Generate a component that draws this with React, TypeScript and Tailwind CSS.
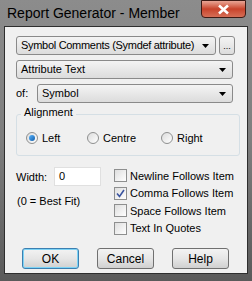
import React from "react";

const font = { fontFamily: '"Liberation Sans", Arial, sans-serif' };

function Arrow() {
  return (
    <svg width="7" height="4" viewBox="0 0 7 4" className="shrink-0">
      <path d="M0 0h7L3.5 4z" fill="#000" />
    </svg>
  );
}

function Combo({ text, className }: { text: string; className: string }) {
  return (
    <div
      className={`h-[19px] flex items-center justify-between pl-[4px] pr-[6px] rounded-[3px] border border-[#8a8a8a] bg-gradient-to-b from-[#f4f4f4] to-[#dcdcdc] text-black ${className}`}
    >
      <span className="whitespace-nowrap">{text}</span>
      <Arrow />
    </div>
  );
}

function Radio({ label, checked }: { label: string; checked?: boolean }) {
  return (
    <div className="flex items-center gap-[4px]">
      <div className="w-[12px] h-[12px] rounded-full border border-[#8e8f8f] bg-gradient-to-br from-[#dcdcdc] to-[#ffffff] flex items-center justify-center">
        {checked && <div className="w-[6px] h-[6px] rounded-full bg-gradient-to-br from-[#57b4ff] to-[#0f5da8]" />}
      </div>
      <span>{label}</span>
    </div>
  );
}

function Check({ label, checked }: { label: string; checked?: boolean }) {
  return (
    <div className="flex items-center gap-[3px] h-[17.5px]">
      <div className="w-[13px] h-[13px] shrink-0 border border-[#8e8f8f] bg-gradient-to-br from-[#dedede] to-[#ffffff] flex items-center justify-center">
        {checked && (
          <svg width="9" height="9" viewBox="0 0 9 9">
            <path d="M1 4.5l2.5 3L8 1" stroke="#3a54a0" strokeWidth="1.6" fill="none" />
          </svg>
        )}
      </div>
      <span className="whitespace-nowrap">{label}</span>
    </div>
  );
}

function Button({ label, focused }: { label: string; focused?: boolean }) {
  return (
    <div
      className={`w-[57px] h-[21px] flex items-center justify-center rounded-[3px] border bg-gradient-to-b from-[#f3f3f3] via-[#e6e6e6] to-[#d0d0d0] text-[12px] ${
        focused ? "border-[#3c7fb1] shadow-[inset_0_0_0_1px_#7dd3f5]" : "border-[#707070]"
      }`}
    >
      {label}
    </div>
  );
}

export default function App() {
  return (
    <div
      className="w-[252px] h-[281px] flex flex-col bg-gradient-to-b from-[#8c8c8c] via-[#7e7e7e] to-[#5a5a5a]"
      style={font}
    >
      <div className="h-[26px] flex justify-between shrink-0">
        <div className="pl-[7px] pt-[6px] text-[14px] text-black leading-none">Report Generator - Member</div>
        <div className="w-[45px] h-[18px] mr-[6px] rounded-b-[4px] border border-[#3d1a14] bg-gradient-to-b from-[#e8a595] via-[#c8422a] to-[#d66e56] flex items-center justify-center">
          <svg width="13" height="11" viewBox="0 0 13 11">
            <path d="M2 1.5l9 8M11 1.5l-9 8" stroke="#fff" strokeWidth="2.6" />
          </svg>
        </div>
      </div>
      <div className="mx-[4px] mb-[7px] flex-1 border border-[#2e2e2e] bg-[#f0f0f0] text-[11px] text-black flex flex-col pl-[11px] pr-[11px] pt-[9px]">
        <div className="flex gap-[3px]">
          <Combo text="Symbol Comments (Symdef attribute)" className="w-[200px] tracking-[-0.3px]" />
          <div className="w-[16px] h-[19px] rounded-[3px] border border-[#8a8a8a] bg-gradient-to-b from-[#f4f4f4] to-[#dcdcdc] flex items-end justify-center pb-[3px] text-[9px] leading-none">
            ...
          </div>
        </div>
        <Combo text="Attribute Text" className="w-[217px] mt-[5px]" />
        <div className="flex items-center mt-[5px] w-[217px]">
          <span className="w-[21px]">of:</span>
          <Combo text="Symbol" className="flex-1" />
        </div>
        <div className="relative mt-[11px] w-[224px] h-[42px] border border-[#d5dfe5] rounded-[3px]">
          <span className="absolute -top-[8px] left-[4px] px-[3px] bg-[#f0f0f0] leading-none">Alignment</span>
          <div className="flex pl-[9px] pt-[15px]">
            <div className="w-[61px]"><Radio label="Left" checked /></div>
            <div className="w-[74px]"><Radio label="Centre" /></div>
            <Radio label="Right" />
          </div>
        </div>
        <div className="flex mt-[11px]">
          <div className="w-[98px] shrink-0">
            <div className="flex items-center">
              <span className="w-[38px] pt-[2px]">Width:</span>
              <div className="w-[47px] h-[19px] border border-[#e0e0e0] bg-white pl-[4px] flex items-center">0</div>
            </div>
            <div className="mt-[7px] pl-[1px]">(0 = Best Fit)</div>
          </div>
          <div className="flex flex-col">
            <Check label="Newline Follows Item" />
            <Check label="Comma Follows Item" checked />
            <Check label="Space Follows Item" />
            <Check label="Text In Quotes" />
          </div>
        </div>
        <div className="flex gap-[18px] mt-[11px] pl-[6px]">
          <Button label="OK" focused />
          <Button label="Cancel" />
          <Button label="Help" />
        </div>
      </div>
    </div>
  );
}
